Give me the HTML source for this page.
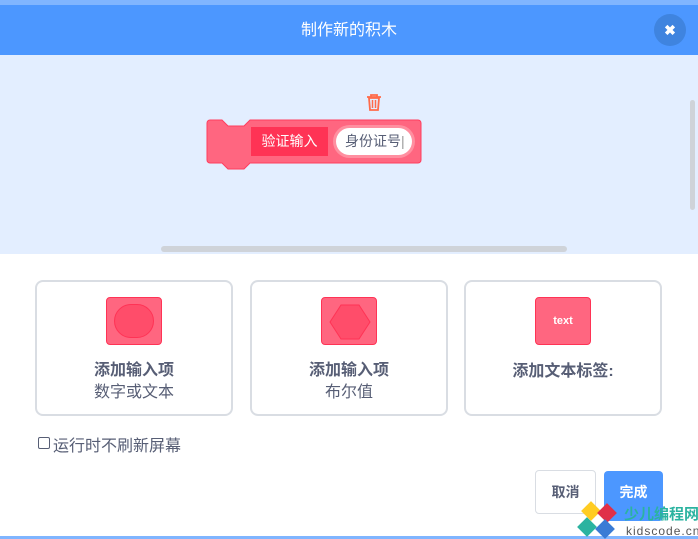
<!DOCTYPE html>
<html><head><meta charset="utf-8"><style>
*{margin:0;padding:0;box-sizing:border-box}
body{width:698px;height:539px;overflow:hidden;background:#fff;font-family:"Liberation Sans","Noto Sans CJK SC",sans-serif;position:relative}
.a{position:absolute;white-space:nowrap}
.card{position:absolute;top:280px;width:198px;height:136px;border:2px solid #d9dde3;border-radius:8px;background:#fff;text-align:center;color:#575e75}
.ic{position:absolute;left:69px;top:15px;width:56px;height:48px;background:#ff6680;border:1px solid #ff3355;border-radius:4px}
.t1{position:absolute;top:74px;width:100%;font-size:16px;font-weight:bold}
.t2{position:absolute;top:96px;width:100%;font-size:16px}
</style></head><body>
<div class="a" style="left:0;top:0;width:698px;height:5px;background:#80b5ff"></div>
<div class="a" style="left:0;top:5px;width:698px;height:50px;background:#4c97ff;color:#fff;font-size:16px;text-align:center;line-height:52px">制作新的积木</div>
<div class="a" style="left:654px;top:14px;width:32px;height:32px;border-radius:50%;background:#3f84df;color:#fff;font-weight:bold;font-size:14px;text-align:center;line-height:32px">✖</div>
<div class="a" style="left:0;top:55px;width:698px;height:199px;background:#e3eeff"></div>
<div class="a" style="left:161px;top:246px;width:406px;height:6px;border-radius:3px;background:#cfd3d9"></div>
<div class="a" style="left:690px;top:100px;width:5px;height:110px;border-radius:3px;background:#cfd3d9"></div>
<svg class="a" style="left:364px;top:93px" width="20" height="20" viewBox="0 0 20 20"><path d="M3 4h14M7 4V2h6v2M5 5l1 12h8l1-12z" fill="none" stroke="#ff6b4a" stroke-width="1.8"/><path d="M8.5 7v8M11.5 7v8" stroke="#ff6b4a" stroke-width="1.5"/></svg>
<svg class="a" style="left:206px;top:118px" width="216" height="55" viewBox="0 0 216 55"><path d="M4 2h12l6 6h16l6-6h168a3 3 0 0 1 3 3v37a3 3 0 0 1-3 3H44l-6 6H22l-6-6H4a3 3 0 0 1-3-3V5a3 3 0 0 1 3-3z" fill="#ff6680" stroke="#ff3d5e" stroke-width="1"/></svg>
<div class="a" style="left:251px;top:127px;width:77px;height:29px;background:#ff3355;color:#fff;font-size:14px;line-height:29px;text-align:center">验证输入</div>
<div class="a" style="left:333px;top:125px;width:82px;height:33px;border-radius:17px;background:#ff8fa0"></div>
<div class="a" style="left:336px;top:128px;width:76px;height:27px;border-radius:14px;background:#fff;color:#575e75;font-size:14px;line-height:27px;padding-left:9px">身份证号<span style="color:#999">|</span></div>
<div class="card" style="left:35px"><div class="ic"><div class="a" style="left:7px;top:6px;width:40px;height:34px;border-radius:17px;background:#ff4d6a;border:1px solid #ff3355"></div></div><div class="t1">添加输入项</div><div class="t2">数字或文本</div></div>
<div class="card" style="left:250px"><div class="ic"><svg class="a" style="left:7px;top:6px" width="42" height="36" viewBox="0 0 42 36"><path d="M12 1h18l11 17-11 17H12L1 18z" fill="#ff4d6a" stroke="#ff3355"/></svg></div><div class="t1">添加输入项</div><div class="t2">布尔值</div></div>
<div class="card" style="left:464px"><div class="ic" style="color:#fff;font-size:11px;font-weight:bold;line-height:46px">text</div><div class="t1" style="top:75px">添加文本标签:</div></div>
<div class="a" style="left:38px;top:437px;width:12px;height:12px;border:1px solid #575e75;border-radius:2px"></div>
<div class="a" style="left:53px;top:432px;font-size:16px;color:#575e75">运行时不刷新屏幕</div>
<div class="a" style="left:535px;top:470px;width:61px;height:44px;border:1px solid #d9dde3;border-radius:4px;color:#575e75;font-size:14px;font-weight:bold;text-align:center;line-height:42px">取消</div>
<div class="a" style="left:604px;top:471px;width:59px;height:50px;border-radius:4px;background:#4c97ff;color:#fff;font-size:14px;font-weight:bold;text-align:center;line-height:42px">完成</div>
<div class="a" style="left:0;top:536px;width:698px;height:3px;background:#80b5ff"></div>
<div class="a" style="left:624px;top:506px;font-size:15px;line-height:18px;font-weight:bold;color:#2bb3a0">少儿编程网</div>
<div class="a" style="left:626px;top:524px;font-size:12px;line-height:14px;color:#555;letter-spacing:1px">kidscode.cn</div>
<div class="a" style="left:584px;top:504px;width:14px;height:14px;background:#ffcc22;transform:rotate(45deg)"></div>
<div class="a" style="left:600px;top:506px;width:14px;height:14px;background:#e03048;transform:rotate(45deg)"></div>
<div class="a" style="left:580px;top:520px;width:14px;height:14px;background:#2bb3a0;transform:rotate(45deg)"></div>
<div class="a" style="left:598px;top:522px;width:14px;height:14px;background:#3a7bd5;transform:rotate(45deg)"></div>
</body></html>
